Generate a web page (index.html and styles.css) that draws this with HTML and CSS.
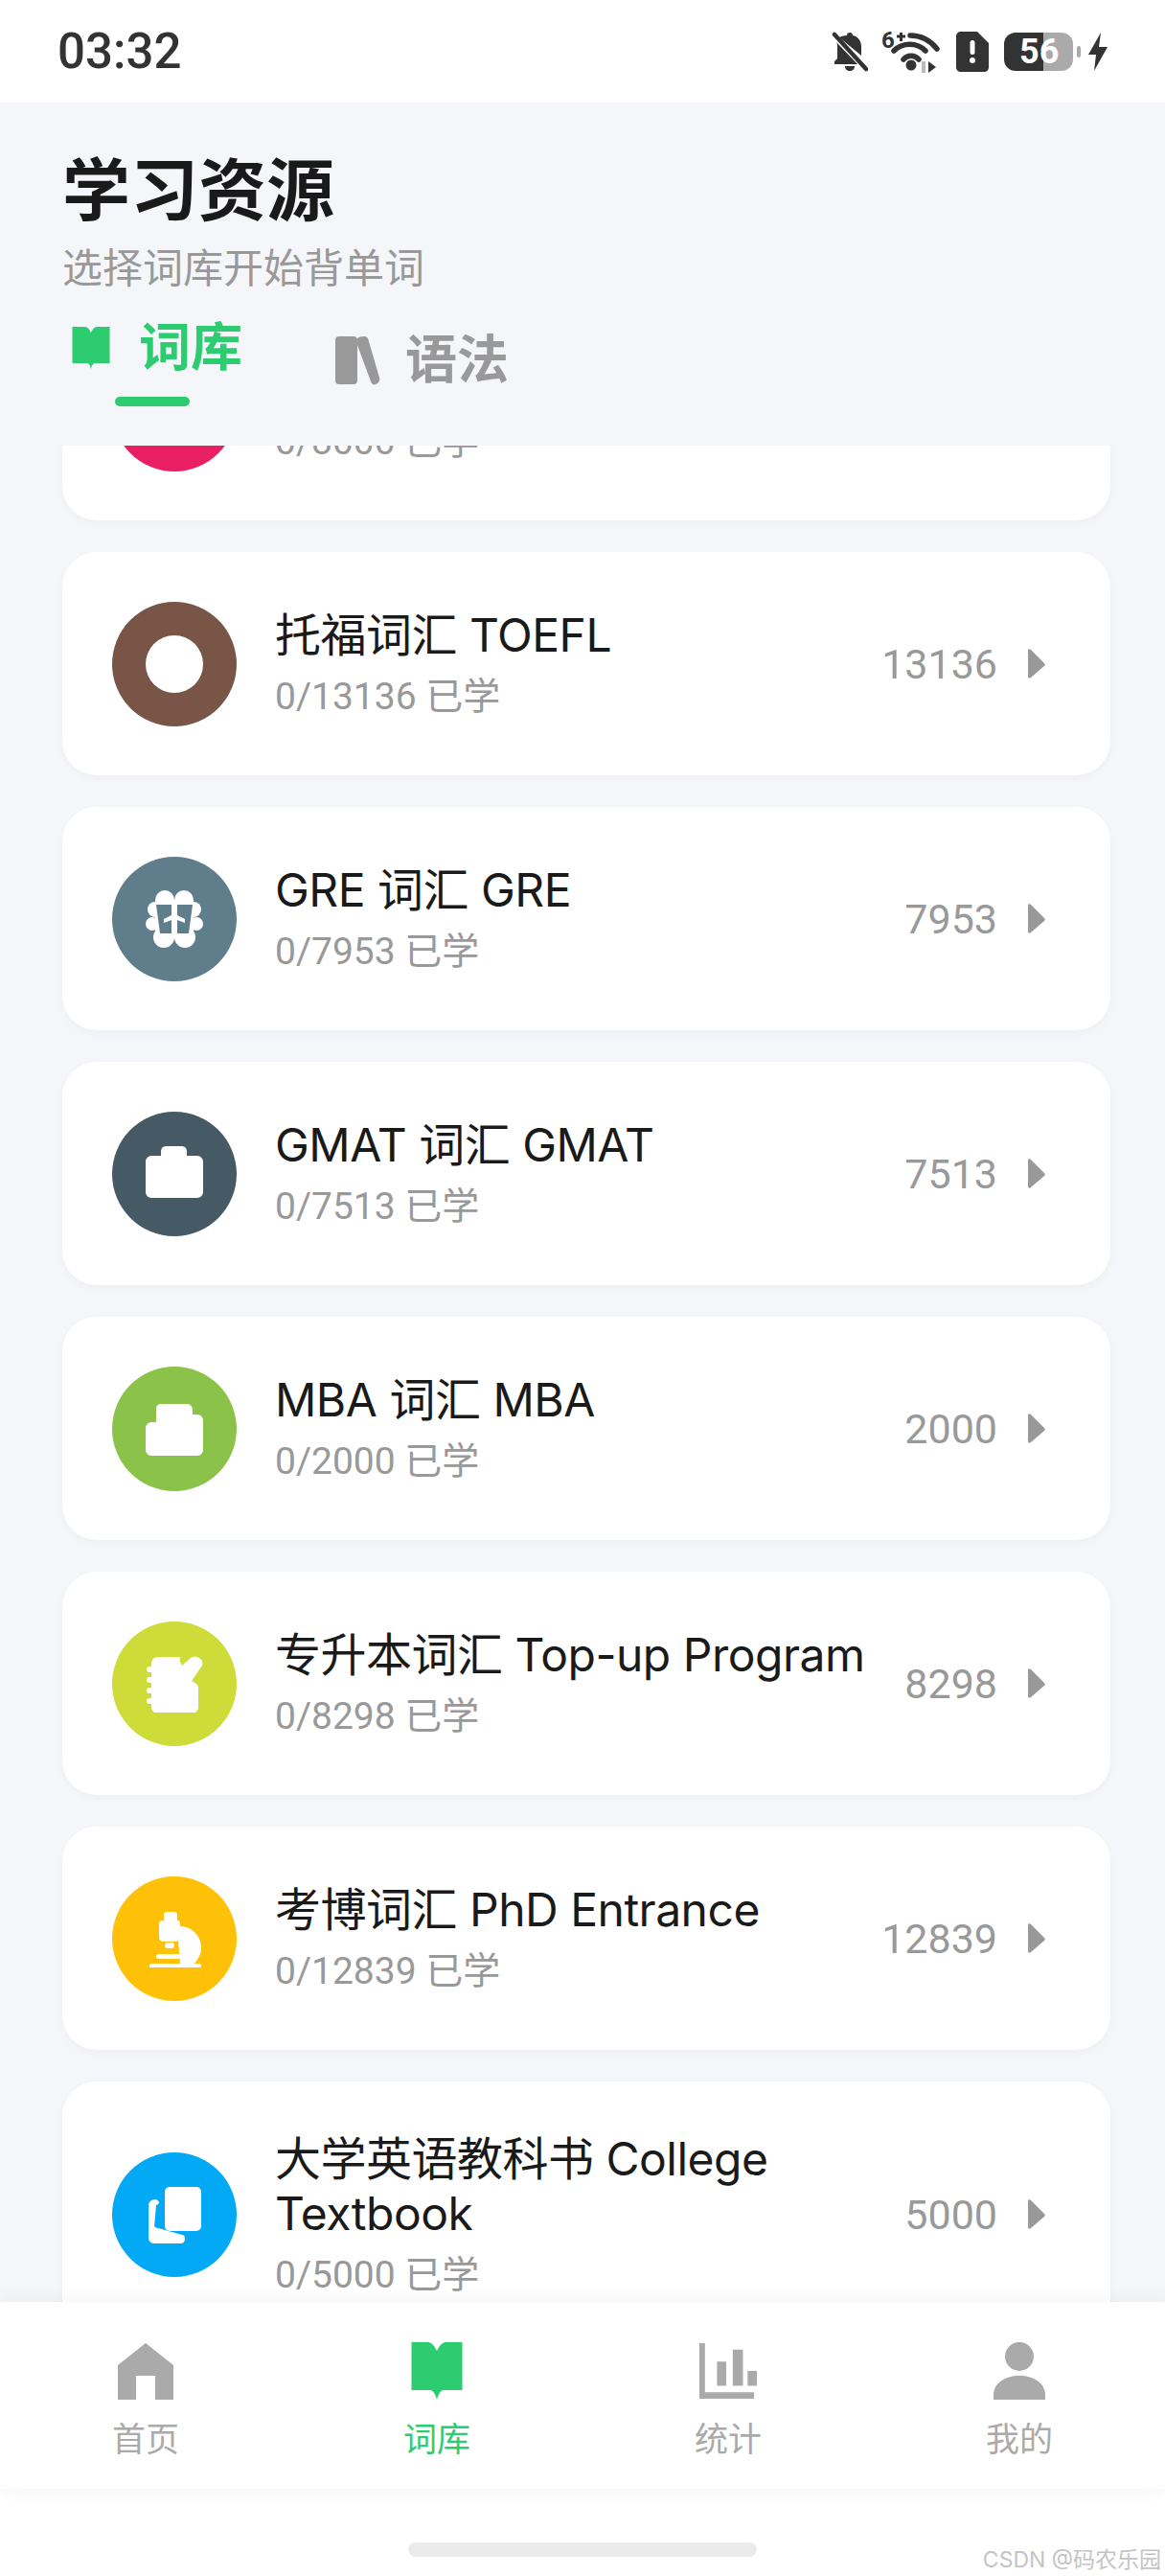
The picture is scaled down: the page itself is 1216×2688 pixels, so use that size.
FILE: index.html
```html
<!DOCTYPE html>
<html lang="zh-CN">
  <head>
    <meta charset="UTF-8" />
    <meta name="viewport" content="width=device-width, initial-scale=1.0" />
    <title>学习资源</title>
    <link rel="stylesheet" href="styles.css">
  </head>
  <body>
    <div class="status-bar">
      <span class="status-time">03:32</span>
      <div class="status-icons">
        <svg class="icon-bell" viewBox="0 0 38 42" width="38" height="42">
          <path fill="#333" d="M19 1c2 0 3 1 3 3 6 1 9 6 9 12v9L8 6c2-1 4-2 8-2 0-2 1-3 3-3zM5 11l22 23H3v-3l3-3V16c0-2 0-3-1-5zM14 36h10c0 3-2 5-5 5s-5-2-5-5z" />
          <path stroke="#333" stroke-width="4.5" stroke-linecap="round" d="M3 3l33 36" />
        </svg>
        <svg class="icon-wifi" viewBox="0 0 62 44" width="62" height="44">
          <text x="0" y="18" class="wifi-six">6</text>
          <path stroke="#333" stroke-width="3" d="M16 6h9M20.500 2v9" />
          <g fill="none" stroke="#333" stroke-width="5.500" stroke-linecap="round">
            <path d="M30 5c10 0 20 4 28 14" />
            <path d="M13 21c9-9 24-9 33 0" />
            <path d="M23 30c4-5 12-5 16 0" />
          </g>
          <circle cx="31" cy="36" r="5.500" fill="#333" />
          <path fill="#bbb" d="M42 32h4v12h-4z" />
          <path fill="#333" d="M49 32l8 6-8 6z" />
        </svg>
        <svg class="icon-sim" viewBox="0 0 34 42" width="34" height="42">
          <path fill="#333" d="M5 0h17l12 12v25c0 3-2 5-5 5H5c-3 0-5-2-5-5V5c0-3 2-5 5-5z" />
          <rect x="14.500" y="9" width="5" height="15" rx="2.500" fill="#fff" />
          <circle cx="17" cy="30" r="3" fill="#fff" />
        </svg>
        <div class="battery">56</div>
        <span class="battery-nub"></span>
        <svg class="icon-bolt" viewBox="0 0 20 40" width="20" height="40">
          <path fill="#333" d="M13 0L0 23h8L6 40l14-25h-9z" />
        </svg>
      </div>
    </div>

    <div class="page-header">
      <h1 class="page-title">学习资源</h1>
      <p class="page-subtitle">选择词库开始背单词</p>
      <div class="tabs">
        <div class="tab active">
          <div class="tab-main">
            <svg class="tab-icon" viewBox="0 0 60 60">
              <path d="M10.500 8h13c3 0 5 3 6.500 6 1.500-3 3.500-6 6.500-6h13v38H35c-3 0-4 2-5 6-1-4-2-6-5-6H10.500z" />
            </svg>
            <span class="tab-label">词库</span>
          </div>
          <div class="tab-line"></div>
        </div>
        <div class="tab">
          <div class="tab-main">
            <svg class="tab-icon" viewBox="0 0 60 60">
              <rect x="7" y="5" width="23" height="50" rx="4" />
              <path d="M30 7c3-2 9-3 11 0l12 41c1 3-1 6-4 7-2 1-4 0-5-3L30 14z" />
            </svg>
            <span class="tab-label">语法</span>
          </div>
        </div>
      </div>
    </div>

    <div class="word-list">
      <div class="word-card first">
        <div class="card-icon pink"></div>
        <div class="card-text">
          <div class="card-title">雅思词汇 IELTS</div>
          <div class="card-sub">0/8000 已学</div>
        </div>
        <span class="card-count">8000</span>
        <svg class="chevron" viewBox="0 0 48 48"><path d="M15 9c1-1 2-1 3 0l14 14c1 1 1 2 0 3L18 38c-1 1-3 1-3-1z" /></svg>
      </div>

      <div class="word-card">
        <div class="card-icon brown">
          <svg viewBox="0 0 60 60"><circle cx="30" cy="30" r="30" /></svg>
        </div>
        <div class="card-text">
          <div class="card-title">托福词汇 TOEFL</div>
          <div class="card-sub">0/13136 已学</div>
        </div>
        <span class="card-count">13136</span>
        <svg class="chevron" viewBox="0 0 48 48"><path d="M15 9c1-1 2-1 3 0l14 14c1 1 1 2 0 3L18 38c-1 1-3 1-3-1z" /></svg>
      </div>

      <div class="word-card">
        <div class="card-icon slate">
          <svg viewBox="0 0 60 60">
            <!-- brain: lobes first, then the two dark halves on top -->
            <circle cx="20" cy="10" r="10" />
            <circle cx="40" cy="10" r="10" />
            <circle cx="10" cy="20" r="8" />
            <circle cx="50" cy="20" r="8" />
            <circle cx="7" cy="35" r="7" />
            <circle cx="53" cy="35" r="7" />
            <circle cx="19" cy="49" r="11" />
            <circle cx="41" cy="49" r="11" />
            <rect x="10" y="10" width="40" height="40" />
            <path class="cut" d="M11 15h16v11l-8 4v4l8-3v14H15zM49 15H33v11l8 4v4l-8-3v14h12z" />
          </svg>
        </div>
        <div class="card-text">
          <div class="card-title">GRE 词汇 GRE</div>
          <div class="card-sub">0/7953 已学</div>
        </div>
        <span class="card-count">7953</span>
        <svg class="chevron" viewBox="0 0 48 48"><path d="M15 9c1-1 2-1 3 0l14 14c1 1 1 2 0 3L18 38c-1 1-3 1-3-1z" /></svg>
      </div>

      <div class="word-card">
        <div class="card-icon steel">
          <svg viewBox="0 0 60 60">
            <path d="M16 7c0-4 2-6 6-6h15c4 0 6 2 6 6v4h11c3 0 6 3 6 6v32c0 3-3 6-6 6H6c-3 0-6-3-6-6V17c0-3 3-6 6-6h10z" />
          </svg>
        </div>
        <div class="card-text">
          <div class="card-title">GMAT 词汇 GMAT</div>
          <div class="card-sub">0/7513 已学</div>
        </div>
        <span class="card-count">7513</span>
        <svg class="chevron" viewBox="0 0 48 48"><path d="M15 9c1-1 2-1 3 0l14 14c1 1 1 2 0 3L18 38c-1 1-3 1-3-1z" /></svg>
      </div>

      <div class="word-card">
        <div class="card-icon lime">
          <svg viewBox="0 0 60 60">
            <path d="M11 9c0-3 2-5 5-5h27c4 0 6 3 6 7v4h5c3 0 6 3 6 6v31c0 3-3 6-6 6H6c-3 0-6-3-6-6V29c0-3 3-6 6-6h5z" />
          </svg>
        </div>
        <div class="card-text">
          <div class="card-title">MBA 词汇 MBA</div>
          <div class="card-sub">0/2000 已学</div>
        </div>
        <span class="card-count">2000</span>
        <svg class="chevron" viewBox="0 0 48 48"><path d="M15 9c1-1 2-1 3 0l14 14c1 1 1 2 0 3L18 38c-1 1-3 1-3-1z" /></svg>
      </div>

      <div class="word-card">
        <div class="card-icon yellow">
          <svg viewBox="0 0 60 60">
            <path d="M13 2h23v5l2 4 9-8c3-2 6-2 9 0 3 2 4 5 3 8L48 27l5 3c1 1 2 2 2 4v20c0 4-3 7-7 7H13c-4 0-7-3-7-7V9c0-4 3-7 7-7z" />
            <rect x="1" y="12" width="8" height="6" rx="3" />
            <rect x="1" y="23" width="8" height="6" rx="3" />
            <rect x="1" y="34" width="8" height="6" rx="3" />
            <rect x="1" y="45" width="8" height="6" rx="3" />
          </svg>
        </div>
        <div class="card-text">
          <div class="card-title">专升本词汇 Top-up Program</div>
          <div class="card-sub">0/8298 已学</div>
        </div>
        <span class="card-count">8298</span>
        <svg class="chevron" viewBox="0 0 48 48"><path d="M15 9c1-1 2-1 3 0l14 14c1 1 1 2 0 3L18 38c-1 1-3 1-3-1z" /></svg>
      </div>

      <div class="word-card">
        <div class="card-icon amber">
          <svg viewBox="0 0 60 60">
            <path d="M19 5c0-2 2-3 3-3h8c2 0 3 1 3 3v6c2 0 3 1 3 3v3c11 0 22 9 22 22 0 7-3 12-7 17H36l-2-24h-1c0 1-1 1-2 1H19c-3 0-5-2-5-5V14c0-2 2-3 5-3z" />
            <rect x="20" y="34" width="10" height="6" rx="3" />
            <rect x="11" y="46" width="25" height="5" rx="2.500" />
            <rect x="4" y="56" width="54" height="5" rx="2.500" />
          </svg>
        </div>
        <div class="card-text">
          <div class="card-title">考博词汇 PhD Entrance</div>
          <div class="card-sub">0/12839 已学</div>
        </div>
        <span class="card-count">12839</span>
        <svg class="chevron" viewBox="0 0 48 48"><path d="M15 9c1-1 2-1 3 0l14 14c1 1 1 2 0 3L18 38c-1 1-3 1-3-1z" /></svg>
      </div>

      <div class="word-card">
        <div class="card-icon sky">
          <svg viewBox="0 0 60 60">
            <rect x="20" y="1" width="38" height="46" rx="5" />
            <path d="M10 14c2 0 4 2 4 3 0 2-2 3-3 3L9 42c1 1 2 2 4 2l25 7c2 0 3 2 3 4s-1 5-4 5H9c-4 0-6-3-6-6V20c0-3 3-6 7-6z" />
          </svg>
        </div>
        <div class="card-text">
          <div class="card-title">大学英语教科书 College Textbook</div>
          <div class="card-sub">0/5000 已学</div>
        </div>
        <span class="card-count">5000</span>
        <svg class="chevron" viewBox="0 0 48 48"><path d="M15 9c1-1 2-1 3 0l14 14c1 1 1 2 0 3L18 38c-1 1-3 1-3-1z" /></svg>
      </div>
    </div>

    <div class="bottom-nav">
      <div class="nav-item">
        <svg class="nav-icon" viewBox="0 0 60 60">
          <path d="M30 1l29 23v36H40V35H20v25H1V24z" />
        </svg>
        <span class="nav-label">首页</span>
      </div>
      <div class="nav-item active">
        <svg class="nav-icon" viewBox="0 0 60 60">
          <path d="M3.500 0h17c4 0 7 4 9.500 9 2.500-5 5.500-9 9.500-9h17v50H38c-4 0-6 3-8 10-2-7-4-10-8-10H3.500z" />
        </svg>
        <span class="nav-label">词库</span>
      </div>
      <div class="nav-item">
        <svg class="nav-icon" viewBox="0 0 62 60">
          <path d="M0 0h6v53h53v7H0zM19 20h10v26H19zM36 7h11v39H36zM52 30h10v16H52z" />
        </svg>
        <span class="nav-label">统计</span>
      </div>
      <div class="nav-item">
        <svg class="nav-icon" viewBox="0 0 60 60">
          <ellipse cx="30" cy="15" rx="15" ry="15" />
          <path d="M3 60v-5c0-12 12-20 27-20s27 8 27 20v5z" />
        </svg>
        <span class="nav-label">我的</span>
      </div>
    </div>

    <div class="home-area">
      <div class="home-bar"></div>
    </div>
    <span class="watermark">CSDN @码农乐园</span>
  </body>
</html>
```

FILE: styles.css
```css
* {
  box-sizing: border-box;
}

body {
  position: relative;
  margin: 0;
  height: 2688px;
  display: flex;
  flex-direction: column;
  overflow: hidden;
  background-color: #f5f6fa;
  font-family: Inter, "Noto Sans CJK SC", sans-serif;
  color: #1a1a1a;
}

/* Status bar */
.status-bar {
  height: 107px;
  flex-shrink: 0;
  display: flex;
  justify-content: space-between;
  align-items: center;
  padding: 0 60px;
  background-color: #fff;
}

.status-time {
  font-family: Roboto, sans-serif;
  font-size: 51px;
  font-weight: 500;
  color: #333;
}

.status-icons {
  display: flex;
  align-items: center;
}

.icon-wifi {
  margin-left: 14px;
}

.wifi-six {
  font-family: Roboto, sans-serif;
  font-size: 24px;
  font-weight: 700;
  fill: #333;
}

.icon-sim {
  margin-left: 16px;
}

.battery {
  width: 72px;
  height: 40px;
  margin-left: 16px;
  padding-left: 16px;
  border-radius: 12px;
  background: linear-gradient(to right, #333 41px, #aaa 41px);
  font-family: Roboto, sans-serif;
  font-size: 36px;
  font-weight: 700;
  line-height: 40px;
  color: #fff;
}

.battery-nub {
  width: 4px;
  height: 12px;
  margin-left: 4px;
  border-radius: 2px;
  background-color: #aaa;
}

.icon-bolt {
  margin-left: 8px;
}

/* Page heading and tabs */
.page-header {
  height: 358px;
  flex-shrink: 0;
  padding: 45px 65px 0;
}

.page-title {
  margin: 0;
  font-size: 71px;
  font-weight: 700;
  line-height: 92px;
}

.page-subtitle {
  margin: 6px 0 0;
  font-size: 42px;
  line-height: 60px;
  color: #999;
}

.tabs {
  display: flex;
  align-items: center;
  gap: 90px;
  margin-top: 17px;
}

.tab-main {
  display: flex;
  align-items: center;
  gap: 20px;
}

.tab-icon {
  width: 60px;
  height: 60px;
  fill: #999;
}

.tab-label {
  font-size: 54px;
  font-weight: 700;
  line-height: 72px;
  color: #999;
}

.tab.active .tab-icon {
  fill: #2ecc71;
}

.tab.active .tab-label {
  color: #2ecc71;
}

.tab-line {
  width: 78px;
  height: 10px;
  margin: 15px auto 0;
  border-radius: 5px;
  background-color: #2ecc71;
}

/* Word list */
.word-list {
  flex: 1;
  min-height: 0;
  overflow: hidden;
  padding: 0 57px 0 65px;
}

.word-card {
  display: flex;
  align-items: center;
  margin-bottom: 33px;
  padding: 51.5px 53px 51.5px 52px;
  border-radius: 36px;
  background-color: #fff;
  box-shadow: 0 3px 8px rgba(0, 0, 0, 0.03);
}

.word-card.first {
  margin-top: -155px;
}

.card-icon {
  display: flex;
  justify-content: center;
  align-items: center;
  width: 130px;
  height: 130px;
  flex-shrink: 0;
  border-radius: 50%;
}

.card-icon svg {
  width: 60px;
  height: 60px;
  fill: #fff;
}

.card-icon .cut {
  fill: #607d8b;
}

.pink {
  background-color: #e91e63;
}

.brown {
  background-color: #795548;
}

.slate {
  background-color: #607d8b;
}

.steel {
  background-color: #455a64;
}

.lime {
  background-color: #8bc34a;
}

.yellow {
  background-color: #cddc39;
}

.amber {
  background-color: #ffc107;
}

.sky {
  background-color: #03a9f4;
}

.card-text {
  flex: 1;
  min-width: 0;
  margin-left: 40px;
}

.card-title {
  font-size: 48px;
  line-height: 57px;
  letter-spacing: -0.5px;
}

.card-sub {
  margin-top: 12px;
  font-family: Roboto, "Noto Sans CJK SC", sans-serif;
  font-size: 39px;
  line-height: 48px;
  color: #999;
}

.card-count {
  margin-left: 24px;
  font-family: Roboto, sans-serif;
  font-size: 43px;
  color: #999;
}

.chevron {
  width: 48px;
  height: 48px;
  margin-left: 17px;
  flex-shrink: 0;
  fill: #999;
}

/* Bottom navigation */
.bottom-nav {
  position: relative;
  height: 195px;
  flex-shrink: 0;
  display: flex;
  padding-top: 42px;
  background-color: #fff;
  box-shadow: 0 0 20px rgba(0, 0, 0, 0.06);
}

.nav-item {
  flex: 1;
  display: flex;
  flex-direction: column;
  align-items: center;
}

.nav-icon {
  width: 60px;
  height: 60px;
  fill: #aaa;
}

.nav-label {
  margin-top: 19px;
  font-size: 35px;
  line-height: 44px;
  color: #aaa;
}

.nav-item.active .nav-icon {
  fill: #2ecc71;
}

.nav-item.active .nav-label {
  color: #2ecc71;
}

.home-area {
  height: 91px;
  flex-shrink: 0;
  padding-top: 56px;
  background-color: #fff;
}

.home-bar {
  width: 364px;
  height: 15px;
  margin: 0 auto;
  border-radius: 8px;
  background-color: #ebebeb;
}

.watermark {
  position: absolute;
  right: 4px;
  bottom: 2px;
  font-size: 23px;
  color: #c4c4c4;
}
```
